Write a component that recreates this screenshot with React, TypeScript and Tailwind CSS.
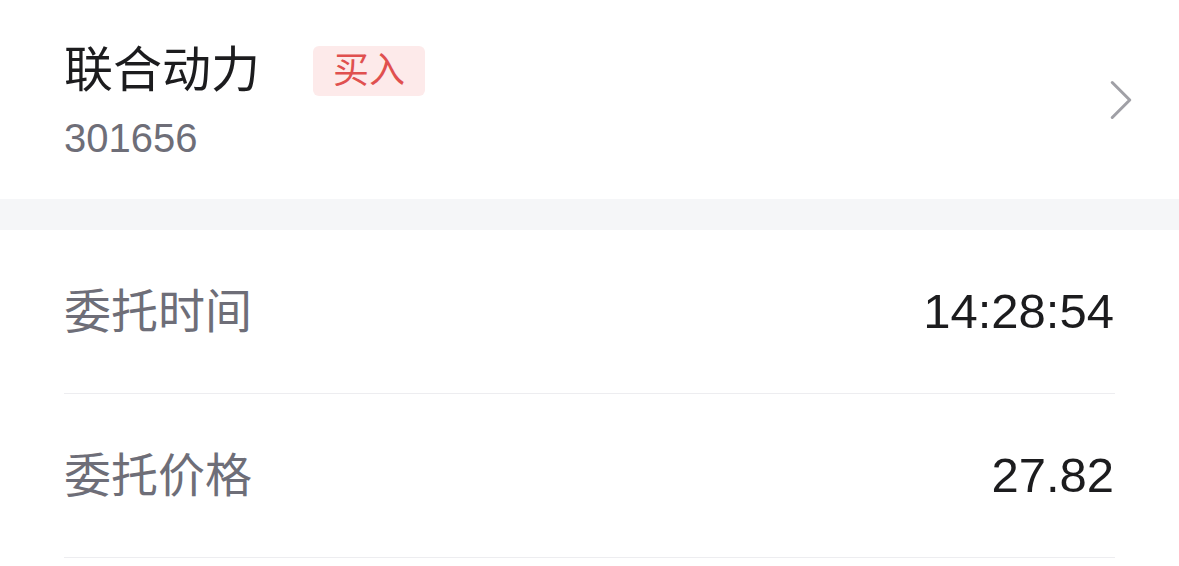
import { ChevronRight } from 'lucide-react';

const font = { fontFamily: '"Liberation Sans", "Noto Sans CJK SC", sans-serif' };

const ROWS = [
  { label: '委托时间', value: '14:28:54' },
  { label: '委托价格', value: '27.82' },
];

export default function App() {
  return (
    <div className="w-[1179px] h-[566px] overflow-hidden bg-white" style={font}>
      {/* Stock header */}
      <div className="h-[199px] flex items-center justify-between pl-16 pr-[23px]">
        <div className="flex flex-col pt-[4px]">
          <div className="flex items-center h-[50px] gap-[53px]">
            <span className="text-[49px] leading-none text-[#1c1c1e]">联合动力</span>
            <span className="h-[50px] px-5 flex items-center rounded-md bg-[#fdeaea] text-[36px] leading-none text-[#e0504f]">
              买入
            </span>
          </div>
          <span className="mt-[22px] text-[40px] leading-none text-[#6e6e78]">301656</span>
        </div>
        <ChevronRight size={70} strokeWidth={1.05} className="text-[#a0a0a6]" />
      </div>

      <div className="h-[31px] bg-[#f5f6f8]" />

      {/* Details */}
      <div className="px-16">
        {ROWS.map((r) => (
          <div key={r.label} className="h-[164px] flex items-center justify-between border-b border-[#ededf0]">
            <span className="text-[47px] leading-none text-[#6e6e78]">{r.label}</span>
            <span className="text-[49px] leading-none text-[#1c1c1e] mr-[1px]">{r.value}</span>
          </div>
        ))}
      </div>
    </div>
  );
}
